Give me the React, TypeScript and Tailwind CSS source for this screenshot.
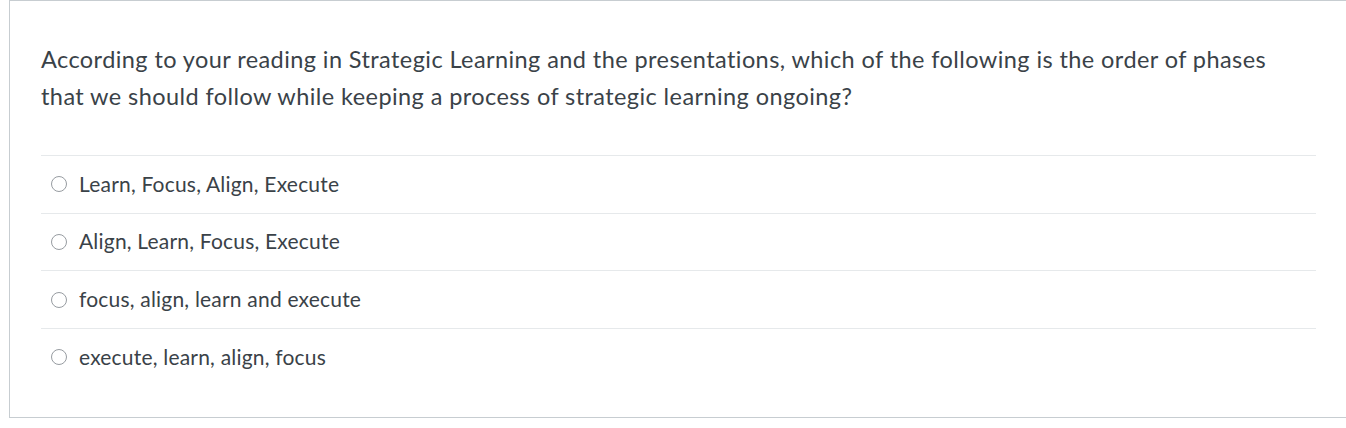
export default function App() {
  const options = [
    "Learn, Focus, Align, Execute",
    "Align, Learn, Focus, Execute",
    "focus, align, learn and execute",
    "execute, learn, align, focus",
  ];

  return (
    <div className="w-[1346px] h-[428px] bg-white font-['Lato',sans-serif] text-[#3a4248]">
      <div className="ml-[9px] w-[1360px] h-[418px] border border-[#c7cdd1] bg-white pl-[31px] pt-[40px]">
        <p className="w-[1290px] text-[23.5px] leading-[37px] tracking-[0.42px]">
          According to your reading in Strategic Learning and the presentations, which of the following is the order of phases
          <br />
          that we should follow while keeping a process of strategic learning ongoing?
        </p>
        <div className="mt-[40px] w-[1275px]">
          {options.map((o) => (
            <div key={o} className="flex items-center h-[57.7px] border-t border-[#e6e9eb] pl-[10px]">
              <span className="w-[16px] h-[16px] shrink-0 rounded-full border border-[#979ca1] bg-white" />
              <span className="ml-[12px] text-[21px] tracking-[0.2px] -translate-y-[1px]">{o}</span>
            </div>
          ))}
        </div>
      </div>
    </div>
  );
}
